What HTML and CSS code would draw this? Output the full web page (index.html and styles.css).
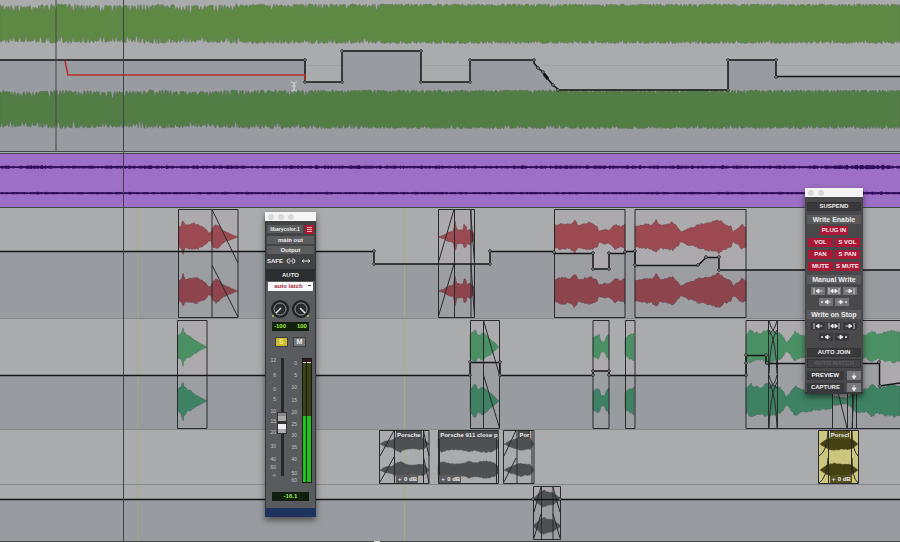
FILE: index.html
```html
<!DOCTYPE html>
<html lang="en">
<head>
<meta charset="utf-8">
<title>Edit window</title>
<link rel="stylesheet" href="styles.css">
</head>
<body>
<svg class="defs" aria-hidden="true">
  <symbol id="i-in" viewBox="0 0 12 8"><path d="M2 1v6M4.500 4h6M7 2v4L4 4z"/></symbol>
  <symbol id="i-all" viewBox="0 0 12 8"><path d="M1 1v6M11 1v6M3.500 4h5M5 2v4L2.500 4zM7 2v4l2.500-2z"/></symbol>
  <symbol id="i-out" viewBox="0 0 12 8"><path d="M10 1v6M1.500 4h6M5 2v4l3-2z"/></symbol>
  <symbol id="i-prev" viewBox="0 0 12 8"><path d="M1.500 3.500h1v1h-1zM5.500 4h5M8 2v4L5 4z"/></symbol>
  <symbol id="i-next" viewBox="0 0 12 8"><path d="M9.500 3.500h1v1h-1zM1.500 4h5M4 2v4l3-2z"/></symbol>
  <symbol id="i-down" viewBox="0 0 12 8"><path d="M6 1v4M4 4h4L6 7z"/></symbol>
</svg>
<main class="timeline">
  <section class="track music" aria-label="Music">
    <svg viewBox="0 0 900 152" preserveAspectRatio="none">
      <path class="shade" d="M0 60H305V82H342V51H421V82H470V60H534V64L543 72L547 78L553 85L559 90H728V60H776V77H900V152H0z"/>
      <path class="faint" d="M0 65.500H900"/>
      <g data-band="4,43,music-top"></g>
      <g data-band="90,128,music-low"></g>
      <path class="auto" d="M0 60H305V82H342V51H421V82H470V60H534V63L538 68L543 72L547 78L553 85L559 90H728V60H776V76.500H900"/>
      <path class="rec" d="M65 61L68 75H305V82"/>
      <path class="line" d="M56 0V152M0 151.500H900"/>
      <g data-nodes="305,60 305,82 342,82 342,51 421,51 421,82 470,82 470,60 534,60 538,68 543,72 553,85 558,90 728,90 728,60 776,60 776,77"></g>
      <path class="dot" d="M544 74L548 79"/>
      <path class="beam" d="M291 82Q294 82 294 84Q294 82 297 82M294 84V90M291 91Q294 91 294 89Q294 91 297 91M292 86H296"/>
    </svg>
  </section>
  <section class="track ambience" aria-label="Ambience">
    <svg viewBox="0 152 900 56" preserveAspectRatio="none">
      <rect class="purple" y="154" width="900" height="53"/>
      <path class="line" d="M0 153.500H900M0 207.500H900"/>
      <g data-thin="167,1.200"></g>
      <g data-thin="193,0.700"></g>
    </svg>
  </section>
  <section class="track effects" aria-label="Effects one">
    <svg viewBox="0 208 900 111" preserveAspectRatio="none">
      <path class="shade" d="M0 251.500H374V264H490V251.500H554V253.500H593V269H609V253.500H625V251.500H635V265.500H698L706 257.500H719V270H900V319H0z"/>
      <g class="guide"><path d="M138 208V319M404.500 208V319"/></g>
      <g class="tint"><rect x="178" y="209" width="60" height="109"/><rect x="438" y="209" width="37" height="109"/><rect x="554" y="209" width="71" height="109"/><rect x="635" y="209" width="111" height="109"/></g>
      <g data-wave="red" data-c="237,291" data-e="179,11 181,12 183,18 185,12 190,13 194,14 198,13 202,11 206,8 209,4 211,5 213,11 216,13 219,11 223,7 226,5 229,4 233,2 238,0"></g>
      <g data-wave="red" data-c="237,291" data-e="438,0 444,2 448,5 453,6 454,10 455,16 457,8 463,7 464,13 466,12 467,7 470,8 474,4"></g>
      <g data-wave="red" data-c="237,291" data-e="555,12 562,14 570,13 575,18 578,12 584,13 590,15 597,11 599,6 605,8 609,7 615,13 620,11 625,13"></g>
      <g data-wave="red" data-c="237,291" data-e="635,11 645,13 652,13 656,18 660,12 666,13 672,15 677,11 681,5 688,9 694,10 698,13 710,15 719,18 724,14 731,11 733,5 738,9 742,13 746,10"></g>
      <path class="edge" d="M178.500 209.500H238V317.500H178.500zM212 209.500V317.500M212 209.500L238 263M212 265L238 317M438.500 209.500H474.500V317.500H438.500zM454.500 209.500V317.500M438.500 262L454 209.500M438.500 316L454 264M470.500 209.500L474.500 263M471 209.500V317.500M471 265L474.500 317M554.500 209.500H625V317.500H554.500zM635 209.500H746V317.500H635z"/>
      <path class="auto" d="M0 251.500H374V264H490V251.500H554V253.500H593V269H609V253.500H625V251.500H635V265.500H698L706 257.500H719V270H900"/>
      <g data-nodes="374,251 374,264 490,264 490,251 554,252 593,253 593,269 609,269 609,253 625,252 635,251 635,265 698,265 706,257 719,257 719,270"></g>
      <path class="sep" d="M0 318.500H900"/>
    </svg>
  </section>
  <section class="track effects" aria-label="Effects two">
    <svg viewBox="0 319 900 111" preserveAspectRatio="none">
      <path class="shade" d="M0 375.500H470V362.500H500V375.500H593V371H609V375.500H746V355.500H766V363.500H879V386L900 383V430H0z"/>
      <g class="guide"><path d="M138 319V430M404.500 319V430"/></g>
      <g class="tint"><rect x="178" y="320" width="29" height="109"/><rect x="470" y="320" width="30" height="109"/><rect x="593" y="320" width="16" height="109"/><rect x="625" y="320" width="10" height="109"/><rect x="746" y="320" width="154" height="109"/></g>
      <g data-wave="green" data-c="347,401" data-e="178,12 181,14 183,21 184,16 187,12 190,11 195,7 200,4 207,0"></g>
      <g data-wave="green" data-c="347,401" data-e="470,12 473,16 475,18 478,12 481,14 483,15 486,12 490,9 495,4 499,0"></g>
      <g data-wave="green" data-c="347,401" data-e="593,10 596,12 599,13 601,6 604,5 607,12 609,13"></g>
      <g data-wave="green" data-c="347,401" data-e="625,9 630,13 634,14"></g>
      <g data-wave="green" data-c="347,401" data-e="746,13 750,18 755,15 762,14 766,18 773,16 780,14 784,9 786,4 789,7 795,16 801,12 808,12 815,10 831,9 832,5 847,3 852,8 857,14 866,12 872,17 878,13 886,16 894,17 900,15"></g>
      <path class="edge" d="M177.500 320.500H207V428.500H177.500zM470.500 320.500H499.500V428.500H470.500zM483.500 320.500V428.500M483.500 320.500L499.500 375M483.500 375L499.500 428M593 320.500H609V428.500H593zM625.500 320.500H635V428.500H625.500zM900 320.500H746V428.500H900M768.500 320.500V428.500M777.500 320.500V428.500M769 320.500Q771 330 777 334M777 320.500Q775 330 769 334M769 374Q770 340 777 330M777 374Q776 340 769 330M769 375Q771 385 777 388M777 375Q775 385 769 388M769 428Q770 395 777 382M777 428Q776 395 769 382M832.500 320V428.500M838 392L847 428M847.500 320V428.500M852.500 320V428.500M854 392L852 428M856.500 320V428.500"/>
      <path class="auto" d="M0 375.500H470V362.500H500V375.500H593V371H609V375.500H746V355.500H766V363.500H879.500V386L900 383"/>
      <g data-nodes="470,375 470,362 500,362 500,375 593,375 593,371 609,371 609,375 746,375 746,363 746,355 766,355 767,363 879,362 880,386"></g>
      <path class="sep" d="M0 429.500H900"/>
    </svg>
  </section>
  <section class="track cars" aria-label="Cars one">
    <svg viewBox="0 430 900 55" preserveAspectRatio="none">
      <g class="guide"><path d="M138 430V485M404.500 430V485"/></g>
      <rect class="yellow" x="818" y="430" width="40" height="54"/>
      <g data-wave="grey" data-c="444,470" data-e="380,0 385,3 392,4 396,7 400,9 406,6 412,5 420,6 424,6 429,0"></g>
      <g data-wave="grey" data-c="444,470" data-e="438,5 442,9 448,7 456,6 463,7 470,9 475,7 482,9 490,9 495,7 498,4"></g>
      <g data-wave="grey" data-c="444,470" data-e="504,0 509,3 515,5 520,7 526,6 530,6 534,0"></g>
      <g data-wave="olive" data-c="444,470" data-e="820,0 825,4 829,6 834,7 840,6 847,6 852,5 858,0"></g>
      <path class="edge" d="M379.500 430.500H429V483.500H379.500zM394.500 430.500V483.500M423.500 430.500V483.500M380 456L394 430.500M380 482L394 457M423.500 431L429 456M423.500 457L429 483M438.500 430.500H498.500V483.500H438.500zM439.500 430.500V483.500M496.500 430.500V483.500M503.500 430.500H534V483.500H503.500zM517 430.500V483.500M532 430.500V483.500M504 456L516 430.500M504 482L516 458M818.500 430.500H858.500V483.500H818.500zM828.500 430.500V483.500M851.500 430.500V483.500M819 456Q827 452 828 431M819 483Q827 478 828 458M858 456Q852 450 852 431M858 483Q852 478 852 458"/>
      <path class="sep" d="M0 484.500H900"/>
    </svg>
    <span class="tag name t1">Porsche</span><span class="tag gain t1">0 dB</span>
    <span class="tag name t2">Porsche 911 close p</span><span class="tag gain t2">0 dB</span>
    <span class="tag name t3">Por</span>
    <span class="tag name t4">Porscl</span><span class="tag gain t4">0 dB</span>
  </section>
  <section class="track cars-low" aria-label="Cars two">
    <svg viewBox="0 485 900 57" preserveAspectRatio="none">
      <path class="shade" d="M0 499.500H900V542H0z"/>
      <g class="guide"><path d="M138 485V542M404.500 485V542"/></g>
      <rect class="tint" x="533" y="486" width="27" height="54"/>
      <g data-wave="grey" data-c="499,526" data-e="534,1 538,5 541,8 544,9 548,7 552,7 556,4 560,1"></g>
      <path class="edge" d="M533.500 486.500H560.500V539.500H533.500zM541.500 486.500V539.500M553 486.500V539.500M534 512L541 487M534 538L541 514M553 487L560 512M553 514L560 538"/>
      <path class="auto" d="M0 499.500H900"/>
      <g data-nodes="533,499 560,499"></g>
      <path class="line" d="M0 541.500H900"/>
      <path class="beam" d="M374 541.500H380"/>
    </svg>
  </section>
  <div class="playhead"></div>

  <aside class="window strip" aria-label="Output strip">
    <header class="titlebar"><i></i><i></i><i></i></header>
    <div class="routing">
      <div class="row"><button class="slot clip">libarycolor.1</button><button class="target" aria-label="Target"></button></div>
      <button class="slot">main out</button>
      <button class="slot">Output</button>
      <div class="row safe"><button>SAFE</button><button aria-label="Link"><svg viewBox="0 0 12 8"><path d="M5 2H4a2 2 0 0 0 0 4h1M7 2h1a2 2 0 0 1 0 4H7M4 4h4"/></svg></button><button aria-label="Width"><svg viewBox="0 0 12 8"><path d="M2 4h8M4 2.500L2 4l2 1.500M8 2.500L10 4 8 5.500"/></svg></button></div>
    </div>
    <h2 class="auto-title">AUTO</h2>
    <select class="mode" aria-label="Automation mode"><option>auto latch</option></select>
    <div class="knobs">
      <svg viewBox="0 0 20 20" role="img" aria-label="Pan left"><circle class="ring" cx="10" cy="10" r="8"/><circle class="cap" cx="10" cy="10" r="6"/><path class="needle" d="M11 9L6 14"/><circle class="led" cx="3" cy="17" r="1"/></svg>
      <svg viewBox="0 0 20 20" role="img" aria-label="Pan right"><circle class="ring" cx="10" cy="10" r="8"/><circle class="cap" cx="10" cy="10" r="6"/><path class="needle" d="M9 9L14 14"/><circle class="led" cx="17" cy="17" r="1"/></svg>
    </div>
    <div class="readout pan"><span>-100</span><span>100</span></div>
    <div class="sm"><button class="solo">S</button><button>M</button></div>
    <div class="levels">
      <svg class="scale" viewBox="0 0 10 126"><g><text x="9" y="5">12</text><text x="9" y="20">6</text><text x="9" y="34">0</text><text x="9" y="44">5</text><text x="9" y="56">10</text><text x="9" y="66">15</text><text x="9" y="77">20</text><text x="9" y="91">30</text><text x="9" y="104">40</text><text x="9" y="112">60</text><text x="9" y="120">∞</text></g></svg>
      <input class="fader" type="range" min="0" max="100" value="44" aria-label="Volume">
      <svg class="scale" viewBox="0 0 10 126"><g><text x="9" y="8">0</text><text x="9" y="20">5</text><text x="9" y="32">10</text><text x="9" y="45">15</text><text x="9" y="57">20</text><text x="9" y="69">25</text><text x="9" y="80">30</text><text x="9" y="92">35</text><text x="9" y="104">40</text><text x="9" y="118">50</text><text x="9" y="125">60</text></g></svg>
      <div class="meter"><i></i><i></i></div>
    </div>
    <div class="readout vol">-16.1</div>
    <footer></footer>
  </aside>

  <aside class="window automation" aria-label="Automation">
    <header class="titlebar"><i></i><i></i></header>
    <div class="panel">
      <button class="wide first">SUSPEND</button>
      <h2>Write Enable</h2>
      <div class="row reds solo-row"><button class="red plug">PLUG IN</button></div>
      <div class="row reds"><button class="red">VOL</button><button class="red">S VOL</button></div>
      <div class="row reds"><button class="red">PAN</button><button class="red">S PAN</button></div>
      <div class="row reds"><button class="red">MUTE</button><button class="red">S MUTE</button></div>
      <h2>Manual Write</h2>
      <div class="row icons"><button aria-label="Write to start"><svg><use href="#i-in"/></svg></button><button aria-label="Write to all"><svg><use href="#i-all"/></svg></button><button aria-label="Write to end"><svg><use href="#i-out"/></svg></button></div>
      <div class="row icons"><button aria-label="Write to previous"><svg><use href="#i-prev"/></svg></button><button aria-label="Write to next"><svg><use href="#i-next"/></svg></button></div>
      <h2>Write on Stop</h2>
      <div class="row icons dark"><button aria-label="Stop to start"><svg><use href="#i-in"/></svg></button><button aria-label="Stop to all"><svg><use href="#i-all"/></svg></button><button aria-label="Stop to end"><svg><use href="#i-out"/></svg></button></div>
      <div class="row icons dark"><button aria-label="Stop to previous"><svg><use href="#i-prev"/></svg></button><button aria-label="Stop to next"><svg><use href="#i-next"/></svg></button></div>
      <button class="wide join">AUTO JOIN</button>
      <button class="wide match" disabled>AUTO MATCH</button>
      <div class="row punch"><button>PREVIEW</button><button class="down" aria-label="Punch preview"><svg><use href="#i-down"/></svg></button></div>
      <div class="row punch"><button>CAPTURE</button><button class="down" aria-label="Punch capture"><svg><use href="#i-down"/></svg></button></div>
    </div>
  </aside>
</main>
<script src="waves.js"></script>
</body>
</html>
```
FILE: styles.css
```css
* { box-sizing: border-box; }
body { margin: 0; background: #aaabac; font-family: "Liberation Sans", Arial, sans-serif; }
button, select, input { margin: 0; padding: 0; border: 0; font: inherit; color: inherit; background: none; }
h2 { margin: 0; font-size: 7px; }
.defs { position: absolute; width: 0; height: 0; }

.timeline { position: relative; display: flex; flex-direction: column; overflow: hidden; }
.track { position: relative; background: #aaabac; }
.track > svg { display: block; width: 100%; height: 100%; }
.music { height: 152px; }
.ambience { height: 56px; }
.effects { height: 111px; }
.cars { height: 55px; }
.cars-low { height: 57px; }

.shade { fill: #989b9f; }
.faint { stroke: #989a9c; stroke-opacity: .6; fill: none; }
.tint { fill: #b4abae; fill-opacity: .2; }
.auto { fill: none; stroke: #141517; stroke-width: 1.5; }
.rec { fill: none; stroke: #b8302e; stroke-width: 1.5; }
.line { fill: none; stroke: #44474a; }
.sep { stroke: #86898c; }
.edge { fill: none; stroke: #292a2d; }
.guide { fill: none; stroke: #b3ac70; stroke-opacity: .8; }
.beam { fill: none; stroke: #d5d6d7; }
.dot { stroke: #111; stroke-width: 3; }
.node { fill: #c5c5c5; stroke: #222; }
.purple { fill: #9d6fc6; }
.yellow { fill: #cdc67f; }
.music-top { fill: #5e8945; stroke: #5d7351; stroke-width: .5; }
.music-low { fill: #527d45; stroke: #506a4d; stroke-width: .5; }
.thin { fill: #2f0b5b; stroke: #2f0b5b; }
.wave { stroke-width: .5; }
.red-0 { fill: #9a4a50; stroke: #6f3f44; }
.red-1 { fill: #8d444d; stroke: #673b43; }
.green-0 { fill: #4b9065; stroke: #46705a; }
.green-1 { fill: #3f8163; stroke: #3c6555; }
.grey-0, .grey-1 { fill: #4f5051; stroke: #4f5051; }
.olive-0, .olive-1 { fill: #45400f; stroke: #45400f; }
.playhead { position: absolute; top: 0; bottom: 0; left: 13.67%; width: 1px; background: #41454b; }

.tag { position: absolute; height: 8px; padding: 0 1px; background: #4a4b4c; color: #eee; font: bold 6px/8px "Liberation Sans", Arial, sans-serif; white-space: nowrap; }
.name { top: 1px; }
.gain { top: 45px; padding-left: 8px; background: #5b5c5d; }
.gain::before { content: "+"; position: absolute; left: 2px; }
.t1 { left: 44%; }
.t2 { left: 48.8%; }
.t3 { left: 57.6%; }
.t4 { left: 92.2%; background: #55501f; }

.window { position: absolute; display: flex; flex-direction: column; color: #eee; font-size: 6px; font-weight: bold; line-height: 8px; box-shadow: 0 3px 6px rgba(0, 0, 0, .5); }
.titlebar { display: flex; align-items: center; gap: 4px; height: 9px; padding-left: 3px; background: #f4f4f4; }
.titlebar i { width: 6px; height: 6px; border-radius: 50%; background: #d9d9d9; }
.row { display: flex; justify-content: center; }

.strip { top: 212px; left: 29.44%; width: 51px; background: #595b5e; border: solid #35373a; border-width: 0 1px; }
.strip .titlebar { margin: 0 -1px; }
.routing { display: flex; flex-direction: column; gap: 2px; padding: 4px 1px 0; height: 48px; background: #424345; }
.routing .row { gap: 2px; }
.slot { width: 100%; height: 8px; line-height: 8px; background: #5b5c5e; text-align: center; white-space: nowrap; }
.clip { flex: 1; font-size: 5px; }
.target { width: 9px; height: 9px; border: 2px solid #b01832; background: linear-gradient(#eab4bc 0 1px, #b01832 1px 2px, #eab4bc 2px 3px, #b01832 3px 4px, #eab4bc 4px); }
.safe button { flex: 1; height: 9px; }
.safe svg { display: block; width: 12px; height: 8px; fill: none; stroke: #ddd; stroke-width: 1; }
.auto-title { height: 12px; background: #2c2e32; font-size: 6px; line-height: 12px; text-align: center; }
.strip h2 { font-size: 6px; }
.mode { appearance: none; height: 9px; margin: 1px 2px 0; background: #fafafa; color: #a3233a; text-align: center; text-align-last: center; font-size: 6px; line-height: 9px; padding-right: 4px; background-image: linear-gradient(#444, #444); background-size: 3px 1px; background-position: right 2px top 3px; background-repeat: no-repeat; }
.knobs { display: flex; justify-content: center; gap: 1px; margin-top: 8px; height: 20px; }
.knobs svg { width: 20px; height: 20px; }
.ring { fill: #303236; stroke: #202225; stroke-width: 2; }
.cap { fill: #292c30; stroke: #8c8f92; }
.needle { stroke: #eee; stroke-width: 1.5; }
.led { fill: #c8cf49; }
.readout { background: #11200e; color: #9bf04a; text-align: center; height: 9px; line-height: 9px; margin: 0 6px; }
.pan { display: flex; justify-content: space-between; padding: 0 2px; margin-top: 3px; }
.sm { display: flex; justify-content: center; gap: 5px; margin-top: 6px; }
.sm button { width: 13px; height: 10px; background: #77797b; border: 1px solid #3b3d40; font-size: 7px; line-height: 8px; }
.sm .solo { background: #cdbd2b; color: #f2eca0; }
.levels { display: flex; justify-content: flex-end; height: 126px; margin-top: 10px; padding-right: 3px; }
.scale { width: 10px; height: 126px; fill: #c4c6c8; font: 5px "Liberation Sans", Arial, sans-serif; text-anchor: end; }
.fader { appearance: none; writing-mode: vertical-lr; direction: rtl; width: 11px; height: 118px; margin: 1px 0 0; background: linear-gradient(90deg, transparent 4px, #25272a 4px 7px, transparent 7px); }
.fader::-webkit-slider-thumb { appearance: none; width: 10px; height: 22px; border: 1px solid #333; background: linear-gradient(#888 0 3px, #aaa 3px 8px, #333 8px 11px, #eee 11px 16px, #aaa 16px); }
.meter { display: flex; gap: 1px; width: 10px; margin: 1px 0 0 4px; padding: 1px; background: #181b12; }
.meter i { flex: 1; background: linear-gradient(#3d1820 0 3px, #ddd 3px 4px, #3b4316 4px 57px, #20c421 57px); }
.vol { margin-top: 9px; }
.strip footer { height: 9px; margin: 7px -1px 0; background: #1d335e; }

.automation { top: 188px; left: 89.44%; width: 58px; background: #49494b; border-bottom: 2px solid #38383a; }
.panel { display: flex; flex-direction: column; padding: 5px 2px 0; }
.panel h2 { height: 9px; line-height: 9px; margin-top: 4px; background: #5a5a5c; text-align: center; }
.wide { height: 9px; background: #39393b; border: 1px solid #343436; line-height: 7px; }
.reds { gap: 2px; margin-top: 3px; }
.red { width: 25px; height: 9px; line-height: 9px; background: #ab1736; white-space: nowrap; }
.plug { width: 28px; }
.solo-row { margin-top: 2px; }
.icons { gap: 2px; margin-top: 3px; }
.icons button, .down { width: 14px; height: 8px; background: #747476; }
.icons.dark button { background: #39393b; }
.icons svg, .down svg { display: block; width: 12px; height: 8px; margin: 0 auto; fill: #eee; stroke: #eee; stroke-width: .8; }
.join { margin-top: 7px; }
.match { margin-top: 2px; color: #5e5e60; background: #444446; }
.punch { gap: 3px; margin-top: 3px; }
.punch button { flex: 1; height: 9px; line-height: 9px; background: #39393b; }
.punch .down { flex: none; background: #79797b; }
```
FILE: waves.js
```js
// Draws the waveforms and automation breakpoints described by data attributes.
const NS = "http://www.w3.org/2000/svg";
let seed = 7;
function rand() {
  seed = (seed * 16807) % 2147483647;
  return seed / 2147483647;
}
function add(parent, tag, attrs) {
  const el = document.createElementNS(NS, tag);
  for (const key in attrs) el.setAttribute(key, attrs[key]);
  parent.append(el);
}
function outline(top, bottom) {
  return "M" + top.concat(bottom.reverse()).map(p => p[0] + " " + p[1].toFixed(1)).join("L") + "z";
}

document.querySelectorAll("[data-band]").forEach(g => {
  const [t, b, name] = g.dataset.band.split(",");
  const top = [], bottom = [];
  for (let x = 0; x <= 900; x++) {
    const depth = x < 250 ? 8 : x < 380 ? 6 : 4;
    const swell = x < 250 ? 0.7 + 0.7 * Math.sin(x / 14) : 0;
    const spike = () => Math.pow(rand(), 1.8) * depth * (x % 3 ? 1 : 0.3);
    top.push([x, +t + swell + spike()]);
    bottom.push([x, +b - swell - spike() + 0.5]);
  }
  add(g, "path", { class: name, d: outline(top, bottom) });
});

document.querySelectorAll("[data-thin]").forEach(g => {
  const [y, a] = g.dataset.thin.split(",").map(Number);
  const top = [], bottom = [];
  for (let x = 0; x <= 900; x++) {
    const s = a * rand() * (x > 840 && x < 885 ? 1.8 : 1);
    top.push([x, y - s]);
    bottom.push([x, y + s + 0.3]);
  }
  add(g, "path", { class: "thin", d: outline(top, bottom) });
});

document.querySelectorAll("[data-wave]").forEach(g => {
  const env = g.dataset.e.split(" ").map(p => p.split(",").map(Number));
  g.dataset.c.split(",").map(Number).forEach((c, lane) => {
    const top = [], bottom = [];
    for (let i = 0; i < env.length - 1; i++) {
      const [x0, a0] = env[i], [x1, a1] = env[i + 1];
      for (let x = x0; x < x1; x++) {
        const a = a0 + (a1 - a0) * (x - x0) / (x1 - x0);
        top.push([x, c - a * (0.88 + rand() * 0.15)]);
        bottom.push([x, c + a * (0.8 + rand() * 0.18)]);
      }
    }
    const end = env[env.length - 1];
    top.push([end[0], c - end[1]]);
    bottom.push([end[0], c + end[1]]);
    add(g, "path", { class: "wave " + g.dataset.wave + "-" + lane, d: outline(top, bottom) });
  });
});

document.querySelectorAll("[data-nodes]").forEach(g => {
  g.dataset.nodes.split(" ").forEach(p => {
    const [x, y] = p.split(",");
    add(g, "circle", { class: "node", cx: x, cy: y, r: 1.3 });
  });
});
```
